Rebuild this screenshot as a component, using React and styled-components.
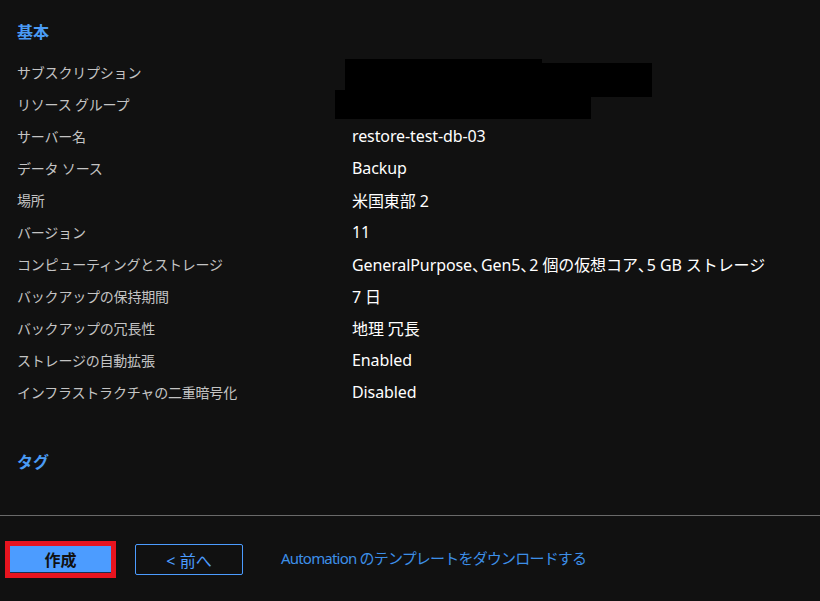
import React from 'react';
import styled, { createGlobalStyle } from 'styled-components';

const GlobalStyle = createGlobalStyle`
  html, body {
    margin: 0;
    padding: 0;
    background: #111111;
  }
  body {
    font-family: "Noto Sans", "Noto Sans CJK JP", sans-serif;
  }
`;

const Page = styled('div')`
  position: relative;
  width: 820px;
  height: 601px;
  background: #111111;
  overflow: hidden;
`;

const Content = styled('div')`
  padding: 20px 0 0 17px;
`;

const SectionTitle = styled('div')`
  color: #4a9bf5;
  font-size: 16px;
  font-weight: 600;
  line-height: 24px;
  margin-bottom: ${(p) => p.gap || 0}px;
`;

const SummaryList = styled('div')`
  display: flex;
  flex-direction: column;
  margin-bottom: 42px;
`;

const Row = styled('div')`
  display: grid;
  grid-template-columns: 335px 1fr;
  height: 32px;
  align-items: center;
`;

const Label = styled('div')`
  color: #c4c4c4;
  font-size: 14px;
  letter-spacing: -0.2px;
`;

const Value = styled('div')`
  color: #ffffff;
  font-size: 16px;
  letter-spacing: -0.1px;
`;

// narrow ideographic comma, as the original font renders it
const Comma = styled('span')`
  letter-spacing: -7px;
`;

const Redaction = styled('div')`
  position: absolute;
  background: #000;
`;

const Divider = styled('hr')`
  margin: 41px 0 0 0;
  border: none;
  border-top: 1px solid #6a6a6a;
`;

const Footer = styled('div')`
  display: flex;
  align-items: center;
  padding: 28px 0 0 10px;
`;

const PrimaryButton = styled('button')`
  width: 101px;
  height: 27px;
  background: #4c9cff;
  border: none;
  border-bottom: 1px solid #1c3050;
  outline: 5px solid #e8141f;
  color: #111;
  font-family: inherit;
  font-size: 16px;
  font-weight: 600;
  padding: 0;
  margin-right: 24px;
`;

const SecondaryButton = styled('button')`
  width: 108px;
  height: 31px;
  background: transparent;
  border: 1px solid #4c9cff;
  border-radius: 2px;
  color: #4c9cff;
  font-family: inherit;
  font-size: 16px;
  padding: 0;
  margin-right: 38px;
`;

const DownloadLink = styled('a')`
  color: #3d8fe8;
  font-size: 15px;
  text-decoration: none;
  letter-spacing: -0.8px;
  line-height: 20px;
  margin-top: -3px;
`;

const compute = (
  <>
    GeneralPurpose<Comma>、</Comma>Gen5<Comma>、</Comma>2 個の仮想コア<Comma>、</Comma>5 GB ストレージ
  </>
);

const rows = [
  ['サブスクリプション', ''],
  ['リソース グループ', ''],
  ['サーバー名', 'restore-test-db-03'],
  ['データ ソース', 'Backup'],
  ['場所', '米国東部 2'],
  ['バージョン', '11'],
  ['コンピューティングとストレージ', compute],
  ['バックアップの保持期間', '7 日'],
  ['バックアップの冗長性', '地理 冗長'],
  ['ストレージの自動拡張', 'Enabled'],
  ['インフラストラクチャの二重暗号化', 'Disabled'],
];

const redactions = [
  { left: 345, top: 59, width: 197, height: 31 },
  { left: 542, top: 63, width: 110, height: 34 },
  { left: 335, top: 90, width: 256, height: 29 },
];

const App = () => (
  <Page>
    <GlobalStyle />
    <Content>
      <SectionTitle gap={12}>基本</SectionTitle>
      <SummaryList>
        {rows.map(([label, value]) => (
          <Row key={label}>
            <Label>{label}</Label>
            <Value>{value}</Value>
          </Row>
        ))}
      </SummaryList>
      <SectionTitle>タグ</SectionTitle>
    </Content>
    <Divider />
    <Footer>
      <PrimaryButton type="button">作成</PrimaryButton>
      <SecondaryButton type="button">&lt; 前へ</SecondaryButton>
      <DownloadLink href="#">Automation のテンプレートをダウンロードする</DownloadLink>
    </Footer>
    {redactions.map((r) => (
      <Redaction key={`${r.left}-${r.top}`} style={r} />
    ))}
  </Page>
);

export default App;
